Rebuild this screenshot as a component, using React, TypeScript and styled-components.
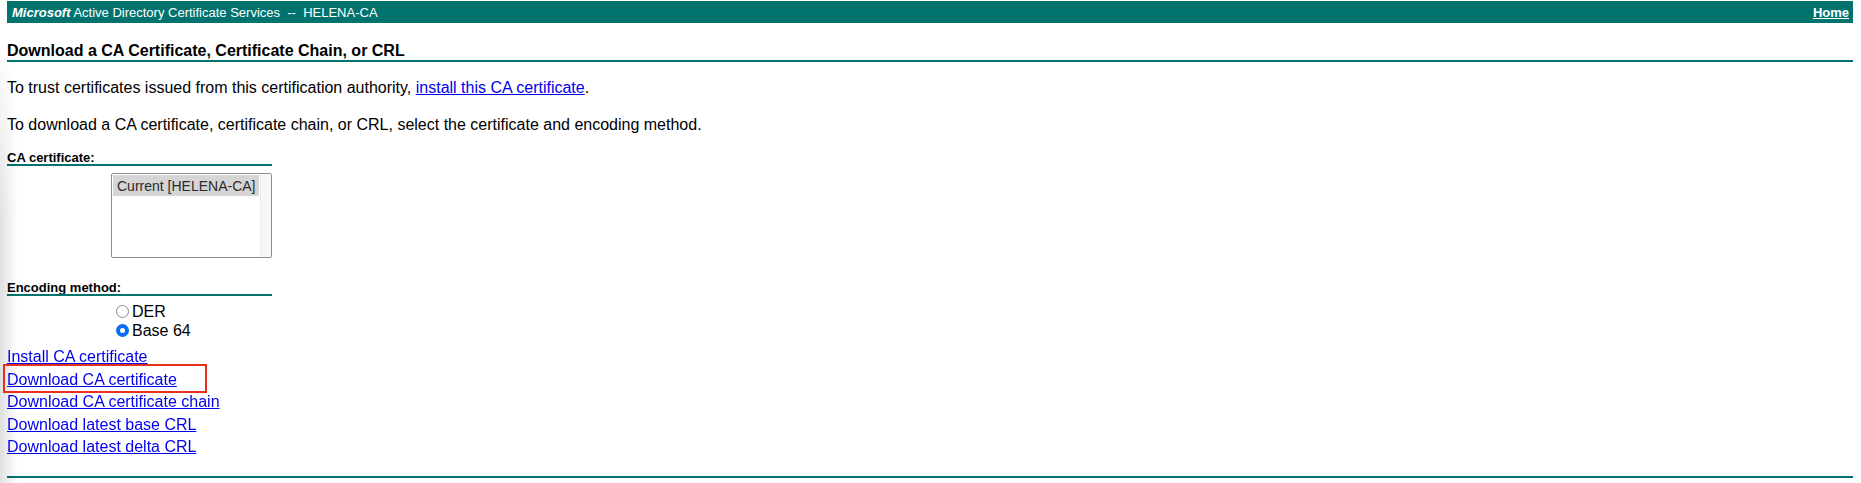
import React from "react";
import styled, { createGlobalStyle } from "styled-components";

const TEAL = "#00736e";

const Global = createGlobalStyle`
  html, body { margin: 0; padding: 0; background: #ffffff; }
  body {
    font-family: "Liberation Sans", Arial, Helvetica, sans-serif;
    color: #000000;
  }
`;

const Page = styled.div`
  position: relative;
  box-sizing: border-box;
  min-height: 483px;
  padding: 1px 8px 0 7px;
  display: flex;
  flex-direction: column;
`;

const EdgeShade = styled.div`
  position: fixed;
  left: 0;
  top: 0;
  bottom: 0;
  width: 18px;
  pointer-events: none;
  background: linear-gradient(to right, rgba(0, 0, 0, 0.12), rgba(0, 0, 0, 0));
  -webkit-mask-image: linear-gradient(to bottom, transparent 40px, #000 220px);
  mask-image: linear-gradient(to bottom, transparent 40px, #000 220px);
`;

const TopBar = styled.div`
  height: 22px;
  background: ${TEAL};
  color: #ffffff;
  display: flex;
  align-items: center;
  justify-content: space-between;
  padding: 0 4px 0 5px;
  font-size: 13px;
  line-height: 15px;
  white-space: pre;
`;

const Brand = styled.b`
  font-style: italic;
  font-weight: 700;
`;

const HomeLink = styled.a`
  color: #ffffff;
  font-weight: 700;
  text-decoration: underline;
`;

const Title = styled.div`
  margin-top: 19px;
  font-size: 16px;
  line-height: 18px;
  font-weight: 700;
`;

const Rule = styled.div<{ $width?: number; $gap?: number }>`
  height: 2px;
  background: ${TEAL};
  width: ${(p) => (p.$width ? `${p.$width}px` : "100%")};
  margin-top: ${(p) => p.$gap ?? 0}px;
`;

const Para = styled.p<{ $gap: number }>`
  margin: ${(p) => p.$gap}px 0 0;
  font-size: 16px;
  line-height: 18px;
`;

const Link = styled.a`
  color: #0000ee;
  text-decoration: underline;
`;

const FieldLabel = styled.div<{ $gap: number }>`
  margin-top: ${(p) => p.$gap}px;
  font-size: 13px;
  line-height: 13px;
  font-weight: 700;
`;

const FieldRow = styled.div<{ $gap: number }>`
  margin-top: ${(p) => p.$gap}px;
  padding-left: 104px;
  display: flex;
  flex-direction: column;
  align-items: flex-start;
`;

const ListBox = styled.div`
  box-sizing: border-box;
  width: 161px;
  height: 85px;
  border: 1px solid #8d8d8d;
  border-radius: 2px;
  display: flex;
  background: #ffffff;
  overflow: hidden;
`;

const ListItems = styled.div`
  flex: 1;
  padding: 1px;
`;

const ListOption = styled.div<{ $selected?: boolean }>`
  height: 21px;
  padding: 1px 4px 0;
  box-sizing: border-box;
  font-size: 14px;
  line-height: 20px;
  color: #2b2b2b;
  background: ${(p) => (p.$selected ? "#d5d5d5" : "transparent")};
  white-space: nowrap;
`;

const ScrollTrack = styled.div`
  width: 12px;
  box-sizing: border-box;
  background: #f7f7f7;
  border-left: 1px solid #ebebeb;
`;

const RadioRow = styled.label`
  display: flex;
  align-items: center;
  height: 19px;
  font-size: 16px;
  line-height: 19px;
`;

const RadioDot = styled.span<{ $checked?: boolean }>`
  box-sizing: border-box;
  width: 13px;
  height: 13px;
  border-radius: 50%;
  margin: 0 3px 0 5px;
  display: inline-flex;
  align-items: center;
  justify-content: center;
  border: ${(p) => (p.$checked ? "none" : "1.5px solid #8a8a8a")};
  background: ${(p) => (p.$checked ? "#0b6ff2" : "#ffffff")};
  &::after {
    content: "";
    display: ${(p) => (p.$checked ? "block" : "none")};
    width: 5px;
    height: 5px;
    border-radius: 50%;
    background: #ffffff;
  }
`;

const LinkList = styled.div`
  margin-top: 6px;
  display: flex;
  flex-direction: column;
  align-items: flex-start;
`;

const LinkRow = styled.div`
  position: relative;
  font-size: 16px;
  line-height: 22.5px;
  height: 22.5px;
`;

const Highlight = styled.span`
  position: absolute;
  left: -4px;
  top: -5px;
  width: 204px;
  height: 29px;
  box-sizing: border-box;
  border: 2px solid #e8311d;
  pointer-events: none;
`;

const links = [
  "Install CA certificate",
  "Download CA certificate",
  "Download CA certificate chain",
  "Download latest base CRL",
  "Download latest delta CRL",
];

export default function App() {
  return (
    <>
      <Global />
      <Page>
        <EdgeShade />
        <TopBar>
          <span>
            <Brand>Microsoft</Brand> Active Directory Certificate Services {"\u00a0"}--{"\u00a0"} HELENA-CA
          </span>
          <HomeLink href="#">Home</HomeLink>
        </TopBar>
        <Title>Download a CA Certificate, Certificate Chain, or CRL</Title>
        <Rule />
        <Para $gap={17}>
          To trust certificates issued from this certification authority,{" "}
          <Link href="#">install this CA certificate</Link>.
        </Para>
        <Para $gap={19}>
          To download a CA certificate, certificate chain, or CRL, select the certificate and encoding method.
        </Para>
        <FieldLabel $gap={17}>CA certificate:</FieldLabel>
        <Rule $width={265} />
        <FieldRow $gap={7}>
          <ListBox>
            <ListItems>
              <ListOption $selected>Current [HELENA-CA]</ListOption>
            </ListItems>
            <ScrollTrack />
          </ListBox>
        </FieldRow>
        <FieldLabel $gap={23}>Encoding method:</FieldLabel>
        <Rule $width={265} />
        <FieldRow $gap={6}>
          <RadioRow>
            <RadioDot />
            DER
          </RadioRow>
          <RadioRow>
            <RadioDot $checked />
            Base 64
          </RadioRow>
        </FieldRow>
        <LinkList>
          {links.map((t, i) => (
            <LinkRow key={t}>
              <Link href="#">{t}</Link>
              {i === 1 && <Highlight />}
            </LinkRow>
          ))}
        </LinkList>
        <Rule $gap={17} />
      </Page>
    </>
  );
}
